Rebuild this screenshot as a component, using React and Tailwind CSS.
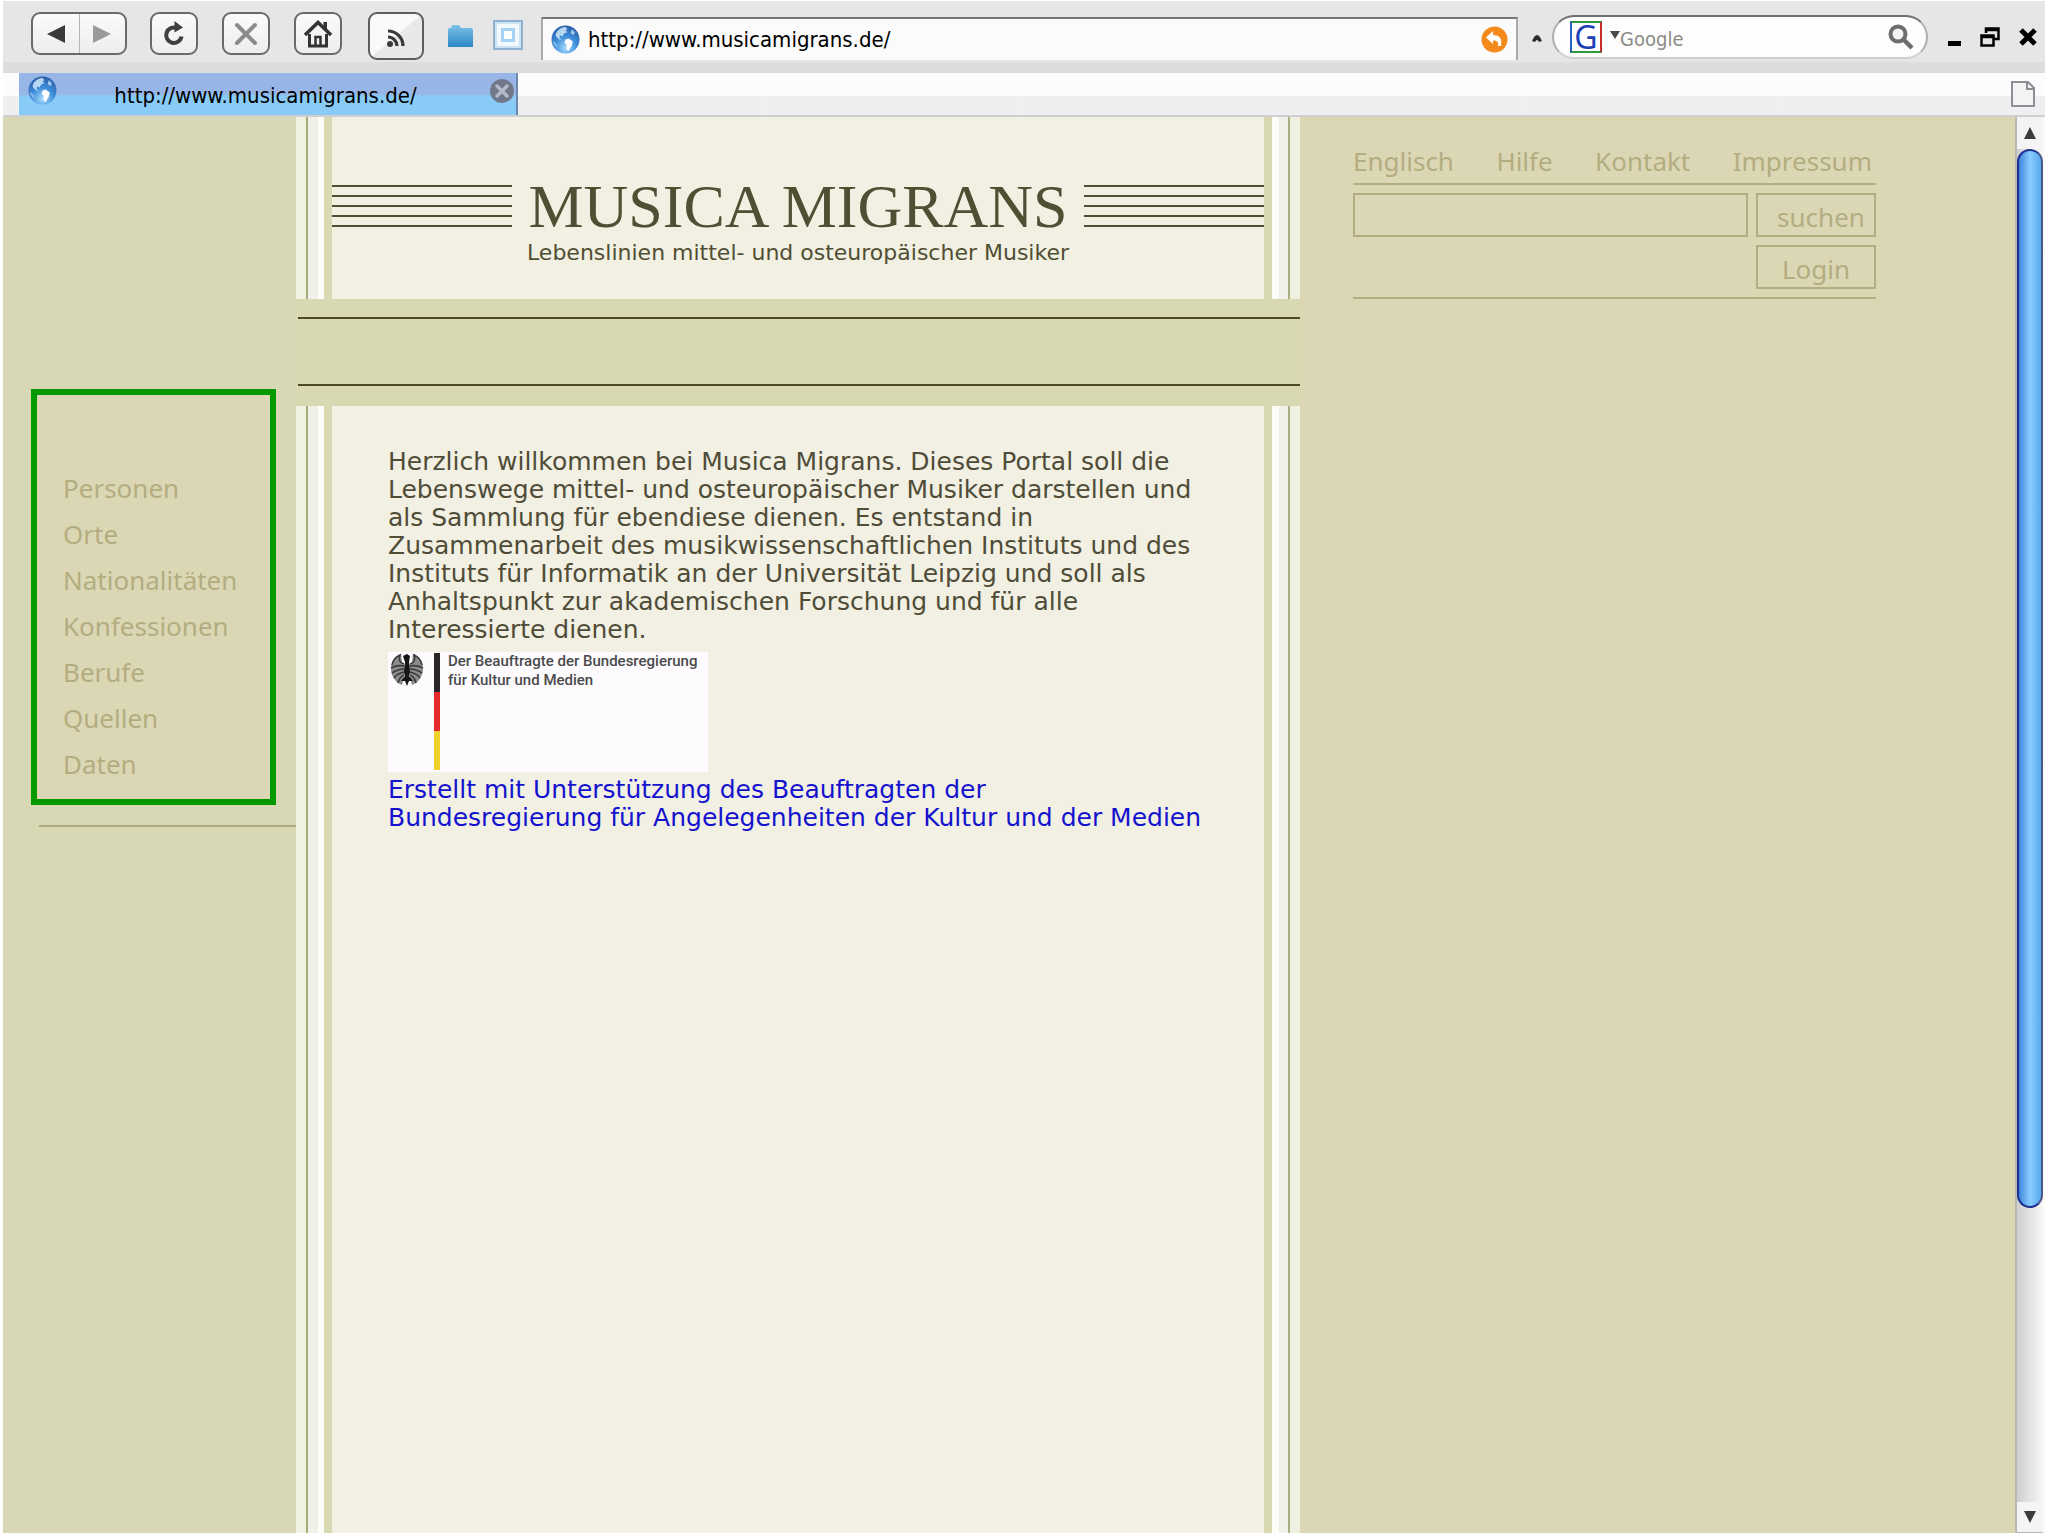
import React from 'react';

const menuItems = ['Personen', 'Orte', 'Nationalitäten', 'Konfessionen', 'Berufe', 'Quellen', 'Daten'];
const topLinks = ['Englisch', 'Hilfe', 'Kontakt', 'Impressum'];

// --- Icons ---
const Globe = ({ id }) => (
  <svg className="size-[29px] shrink-0" viewBox="0 0 28 28" aria-hidden="true">
    <defs>
      <radialGradient id={id} cx="0.5" cy="0.8" r="0.8">
        <stop offset="0" stopColor="#a5dcfb" />
        <stop offset="0.5" stopColor="#3f8fdc" />
        <stop offset="1" stopColor="#2a5ca6" />
      </radialGradient>
    </defs>
    <circle cx="14" cy="14" r="13.5" fill={`url(#${id})`} />
    <path d="M6 6c3-3 5-4 8-4l2 2-2 1 2 2-3 1-2 3-2-1-1 2 2 2-2 0-3-3c-1-2 0-3 1-5z" fill="#cfe7f8" opacity="0.85" />
    <path d="M14 14l3-1 4 3-1 4-3 5-2-1 0-5-2-2z" fill="#fff" />
    <path d="M20 4l3 3-1 3-3-2z" fill="#9cc8ee" />
    <path d="M2 15l3 3 1 4c-2-2-4-4-4-7z" fill="#b8dcf6" opacity="0.7" />
  </svg>
);

const Reload = () => (
  <svg className="w-6 h-7" viewBox="0 0 24 28" aria-hidden="true">
    <path d="M15 8.200A7.700 7.700 0 1 0 19.500 16.500" fill="none" stroke="#3f3f3f" strokeWidth="4" />
    <path d="M12.500 1l8.500 6.500-8.500 5z" fill="#3f3f3f" />
  </svg>
);

const Stop = () => (
  <svg className="size-6" viewBox="0 0 24 24" aria-hidden="true">
    <path d="M3 3l18 18M21 3L3 21" stroke="#8b8b8b" strokeWidth="4" strokeLinecap="round" />
  </svg>
);

const Home = () => (
  <svg className="w-7 h-7" viewBox="0 0 28 28" aria-hidden="true">
    <path d="M1 15L14 2.500 27 15" fill="none" stroke="#333" strokeWidth="3.500" />
    <path d="M19.500 2h3.500v8l-3.500-3z" fill="#333" />
    <path d="M5.500 14v12h17V14" fill="none" stroke="#333" strokeWidth="3" />
    <path d="M11.500 26v-9h5v9" fill="none" stroke="#333" strokeWidth="2.500" />
  </svg>
);

const Feed = () => (
  <svg className="size-5 mt-1" viewBox="0 0 20 20" aria-hidden="true">
    <circle cx="4" cy="16" r="3" fill="#3a3a3a" />
    <path d="M2 9a9 9 0 0 1 9 9M2 3a15 15 0 0 1 15 15" fill="none" stroke="#3a3a3a" strokeWidth="3.200" />
  </svg>
);

const Folder = () => (
  <svg className="w-[27px] h-6" viewBox="0 0 27 24" aria-hidden="true">
    <defs>
      <linearGradient id="folder" x1="0" y1="0" x2="0" y2="1">
        <stop offset="0" stopColor="#7cc3e8" />
        <stop offset="1" stopColor="#2d88c4" />
      </linearGradient>
    </defs>
    <path d="M1 5l1-1h2l1-3h7l2 3h11l1 2v17H1z" fill="url(#folder)" />
  </svg>
);

const Panel = () => (
  <svg className="size-[30px]" viewBox="0 0 30 30" aria-hidden="true">
    <rect x="1" y="1" width="28" height="28" fill="#c9e2f6" stroke="#8fb2d2" strokeWidth="2" />
    <rect x="4" y="4" width="22" height="22" fill="#f2f9fe" />
    <rect x="8" y="8" width="14" height="14" fill="#a4d3f5" />
    <rect x="11" y="11" width="8" height="8" fill="#fff" />
  </svg>
);

const Undo = () => (
  <svg className="size-[27px]" viewBox="0 0 27 27" aria-hidden="true">
    <circle cx="13.500" cy="13.500" r="13" fill="#f58a1c" />
    <path d="M5 11.500L12 5v4c6 0 9.500 3 8 11h-3c1-4-1-5.500-5-5.500V18z" fill="#fff" />
  </svg>
);

const GoogleMark = () => (
  <span className="flex items-center justify-center w-8 h-8 shrink-0 bg-white border-2 border-t-[#2f9a3c] border-b-[#2f9a3c] border-l-[#2b5fc0] border-r-[#c92a2a] text-[32px] leading-7 text-[#1c3fb5] font-['Noto_Sans']">
    G
  </span>
);

const Magnifier = () => (
  <svg className="size-[26px]" viewBox="0 0 26 26" aria-hidden="true">
    <circle cx="10" cy="10" r="7.500" fill="#f4f4f4" stroke="#6d6d6d" strokeWidth="4" />
    <path d="M15.500 15.500L24 24" stroke="#6d6d6d" strokeWidth="4.500" />
  </svg>
);

const Eagle = () => (
  <svg className="w-[34px] h-[34px]" viewBox="0 0 34 34" aria-hidden="true">
    <path d="M11 1C5 3 1 9 1 16c0 7 5 14 11 16l3-12V12l-3-3z" fill="#8c8c8e" />
    <path d="M23 1c6 2 10 8 10 15 0 7-5 14-11 16l-3-12V12l3-3z" fill="#8c8c8e" />
    <g fill="none" stroke="#3b3b3b" strokeWidth="1.600">
      <path d="M14 11C10 10 8 7 10 2 5 4 3 7 2 12" />
      <path d="M20 11c4-1 6-4 4-9 5 2 7 5 8 10" />
      <path d="M14 13C9 12 5 13 1 15M14 16c-5 0-9 2-12 4M14 19c-4 1-8 3-10 6M14 22c-3 1-5 4-6 8" />
      <path d="M20 13c5-1 9 0 13 2M20 16c5 0 9 2 12 4M20 19c4 1 8 3 10 6M20 22c3 1 5 4 6 8" />
    </g>
    <path d="M13 3l4-2 3 2-1 6 1 10-1 4 4 5-4 0-2 5-2-5-4 0 4-5-1-4 1-10z" fill="#161616" />
  </svg>
);

const ToolButton = ({ label, children }) => (
  <button
    aria-label={label}
    className="flex items-center justify-center w-12 h-[43px] rounded-[9px] border-2 border-[#6a6a6a] bg-linear-to-b from-[#fbfbfb] to-[#ededed]"
  >
    {children}
  </button>
);

// --- Browser toolbar ---
const Toolbar = () => (
  <div className="flex items-start h-[72px] pl-7 pr-2 pt-[11px] bg-linear-to-b from-[#e6e6e6] from-85% to-[#dedddd] to-85%">
    <div className="flex w-24 h-[43px] rounded-[9px] border-2 border-[#6a6a6a] bg-linear-to-b from-[#fbfbfb] to-[#ededed]">
      <button aria-label="Zurück" className="flex-1 flex items-center justify-center border-r border-[#b5b5b5]">
        <svg className="w-[18px] h-[18px]" viewBox="0 0 18 18"><path d="M0 9L18 0v18z" fill="#3a3a3a" /></svg>
      </button>
      <button aria-label="Vor" className="flex-1 flex items-center justify-center">
        <svg className="w-[18px] h-[18px]" viewBox="0 0 18 18"><path d="M18 9L0 0v18z" fill="#9a9a9a" /></svg>
      </button>
    </div>
    <div className="flex gap-6 ml-[23px]">
      <ToolButton label="Neu laden"><Reload /></ToolButton>
      <ToolButton label="Stopp"><Stop /></ToolButton>
      <ToolButton label="Startseite"><Home /></ToolButton>
    </div>
    <button aria-label="Feed" className="flex items-center justify-center w-14 h-12 ml-[26px] rounded-[9px] border-2 border-[#5e5e5e] bg-linear-to-br from-[#fafafa] from-50% to-[#e9e9e9] to-50%">
      <Feed />
    </button>
    <button aria-label="Ordner" className="mt-3 ml-[23px]"><Folder /></button>
    <button aria-label="Seitenleiste" className="mt-2 ml-[19px]"><Panel /></button>

    <div className="flex items-center flex-1 h-[43px] mt-[5px] ml-[18px] px-2 bg-[#fbfbfb] border-t-2 border-t-[#757575] border-x-2 border-x-[#a9a9a9]">
      <Globe id="globe-address" />
      <input
        aria-label="Adresse"
        defaultValue="http://www.musicamigrans.de/"
        className="flex-1 ml-2 bg-transparent text-[22px] text-black outline-none font-['DejaVu_Sans_Condensed','DejaVu_Sans',sans-serif]"
      />
      <button aria-label="Los"><Undo /></button>
    </div>

    <svg className="w-[10px] h-[9px] mt-[23px] mx-3.5" viewBox="0 0 10 9" aria-hidden="true">
      <path d="M0 6Q5-6 10 6L7 7Q5 3 3 7z" fill="#2c2c2c" />
    </svg>

    <div className="flex items-center w-[376px] h-11 mt-[3px] -ml-1 pl-4 pr-3 rounded-full bg-[#fdfdfd] border-2 border-t-[#707070] border-x-[#b0b0b0] border-b-[#cfcfcf]">
      <GoogleMark />
      <svg className="w-[10px] h-2 ml-2 mb-1" viewBox="0 0 10 8" aria-hidden="true"><path d="M0 0h10L5 8z" fill="#4a4a4a" /></svg>
      <input
        aria-label="Suche"
        placeholder="Google"
        className="flex-1 w-0 pt-1 bg-transparent text-[20px] placeholder:text-[#8b8b86] outline-none font-['DejaVu_Sans_Condensed','DejaVu_Sans',sans-serif]"
      />
      <button aria-label="Suchen"><Magnifier /></button>
    </div>

    <div className="flex gap-[19px] ml-5 pt-[15px]">
      <button aria-label="Minimieren">
        <svg className="w-[13px] h-5" viewBox="0 0 13 20"><path d="M0 14h13v5H0z" /></svg>
      </button>
      <button aria-label="Wiederherstellen">
        <svg className="size-5" viewBox="0 0 20 20">
          <path d="M6 6V1.500h12.500V12H14M6 3h12" fill="none" stroke="#000" strokeWidth="2.500" />
          <path d="M1.500 8.500H13.500V18.500H1.500zM1.500 10h12" fill="none" stroke="#000" strokeWidth="2.500" />
        </svg>
      </button>
      <button aria-label="Schließen">
        <svg className="w-[18px] h-5" viewBox="0 0 18 20"><path d="M2 3l14 14M16 3L2 17" stroke="#000" strokeWidth="5" /></svg>
      </button>
    </div>
  </div>
);

// --- Tab strip ---
const TabStrip = () => (
  <div className="flex items-stretch h-11 pl-4 pr-2.5 border-b-2 border-[#cfced0] bg-linear-to-b from-[#fcfbfd] from-55% to-[#efeef1] to-55%">
    <div className="flex items-center w-[499px] pl-[9px] pr-0.5 border-r-2 border-[#6d87ad] bg-linear-to-b from-[#97b5e6] from-50% to-[#88cbf6] to-55%">
      <div className="self-start pt-[3px]"><Globe id="globe-tab" /></div>
      <a href="#start" className="flex-1 pr-4 pt-1 text-center text-[22px] leading-8 text-black font-['DejaVu_Sans_Condensed','DejaVu_Sans',sans-serif]">
        http://www.musicamigrans.de/
      </a>
      <button aria-label="Tab schließen" className="self-start pt-[6px]">
        <svg className="size-6" viewBox="0 0 24 24">
          <circle cx="12" cy="12" r="12" fill="#71788a" />
          <path d="M7 7l10 10M17 7L7 17" stroke="#b4bac8" strokeWidth="3.500" strokeLinecap="round" />
        </svg>
      </button>
    </div>
    <button aria-label="Neuer Tab" className="ml-auto">
      <svg className="w-6 h-[26px]" viewBox="0 0 24 26">
        <path d="M1 1h16l6 6v18H1z" fill="#f3f3f4" stroke="#8e8e94" strokeWidth="2" />
        <path d="M16 1v7h7" fill="none" stroke="#8e8e94" strokeWidth="2" />
      </svg>
    </button>
  </div>
);

// --- Left menu ---
const Sidebar = () => (
  <aside className="w-[293px] shrink-0 pt-[272px] bg-[#d8d8b4]">
    <nav className="w-[245px] h-[416px] ml-7 pl-[26px] pt-[70px] border-6 border-[#009a00] bg-[#dbd7b5]">
      <ul className="text-[26px] leading-[46px] text-[#b3ad80]">
        {menuItems.map(item => (
          <li key={item}><a href={`#${item}`}>{item}</a></li>
        ))}
      </ul>
    </nav>
    <hr className="mt-5 ml-9 border-t-2 border-[#aeaa80]" />
  </aside>
);

// --- Vertical ribbons beside the cream panels ---
const LeftRibbon = () => (
  <div className="flex w-9 shrink-0">
    <div className="w-2.5 bg-[#f0f1e1]" />
    <div className="w-0.5 bg-[#a3ad7c]" />
    <div className="w-2.5 bg-[#f0f0e8]" />
    <div className="w-1.5 bg-[#fdfdfc]" />
  </div>
);

const RightRibbon = () => (
  <div className="flex justify-end w-9 shrink-0">
    <div className="w-[7px] bg-[#fdfdf8]" />
    <div className="w-[9px] bg-[#f0f0e8]" />
    <div className="w-0.5 bg-[#a9ad83]" />
    <div className="w-2.5 bg-[#f0f0e1]" />
  </div>
);

const Staff = () => (
  <div className="flex flex-col justify-between w-[180px] h-[42px]">
    {[1, 2, 3, 4, 5].map(n => <div key={n} className="h-0.5 bg-[#504e33]" />)}
  </div>
);

const Banner = () => (
  <header className="flex h-[182px]">
    <LeftRibbon />
    <div className="flex-1 pt-[68px] bg-[#f1f0e2] text-[#504e33]">
      <div className="flex items-center justify-between">
        <Staff />
        <h1 className="text-[62px] leading-[42px] whitespace-nowrap font-['Liberation_Serif',serif]">MUSICA MIGRANS</h1>
        <Staff />
      </div>
      <p className="mt-3.5 text-center text-[22px] leading-6 font-['DejaVu_Sans',sans-serif]">
        Lebenslinien mittel- und osteuropäischer Musiker
      </p>
    </div>
    <RightRibbon />
  </header>
);

const Sponsor = () => (
  <div className="flex w-80 h-[120px] mt-2 bg-[#fdfbfd]">
    <div className="w-[46px] pl-0.5 pt-px"><Eagle /></div>
    <div className="flex flex-col w-1.5 h-[117px] mt-px">
      <div className="flex-1 bg-[#2a2628]" />
      <div className="flex-1 bg-[#e62a2c]" />
      <div className="flex-1 bg-[#efd02c]" />
    </div>
    <p className="ml-2 text-[15px] leading-[19px] font-medium text-[#4a4a4c] whitespace-nowrap font-[Roboto,sans-serif]">
      Der Beauftragte der Bundesregierung<br />
      für Kultur und Medien
    </p>
  </div>
);

const Content = () => (
  <main className="flex flex-1">
    <LeftRibbon />
    <div className="flex-1 pl-14 pt-[42px] bg-[#f1f0e2] text-[25px] leading-7 whitespace-nowrap text-[#4f4c38] font-['DejaVu_Sans',sans-serif]">
      <p>
        Herzlich willkommen bei Musica Migrans. Dieses Portal soll die<br />
        Lebenswege mittel- und osteuropäischer Musiker darstellen und<br />
        als Sammlung für ebendiese dienen. Es entstand in<br />
        Zusammenarbeit des musikwissenschaftlichen Instituts und des<br />
        Instituts für Informatik an der Universität Leipzig und soll als<br />
        Anhaltspunkt zur akademischen Forschung und für alle<br />
        Interessierte dienen.
      </p>
      <Sponsor />
      <a href="#foerderung" className="block mt-1 text-[#1512cf]">
        Erstellt mit Unterstützung des Beauftragten der<br />
        Bundesregierung für Angelegenheiten der Kultur und der Medien
      </a>
    </div>
    <RightRibbon />
  </main>
);

// --- Links, search and login on the right ---
const Tools = () => (
  <div className="w-[523px] ml-[53px] pt-7 text-[26px] text-[#b3ad80]">
    <nav className="flex justify-between h-10 pr-1 leading-8 border-b-2 border-[#b3ae82]">
      {topLinks.map(link => <a key={link} href={`#${link}`}>{link}</a>)}
    </nav>
    <form className="grid grid-cols-[1fr_120px] gap-x-2 gap-y-2 py-2 border-b-2 border-[#b3ae82]">
      <input aria-label="Suchbegriff" className="min-w-0 h-11 px-2 bg-transparent border-2 border-[#b3ae82] outline-none" />
      <button type="button" className="h-11 pl-2.5 pt-1 leading-8 border-2 border-[#b3ae82]">suchen</button>
      <button type="button" className="col-start-2 h-11 pt-1 leading-8 border-2 border-[#b3ae82]">Login</button>
    </form>
  </div>
);

const Scrollbar = () => (
  <div className="flex flex-col w-[30px] shrink-0 pr-0.5 border-l-2 border-[#b9b9b4] bg-linear-to-r from-[#cfcfd1] to-[#fbfbf9]">
    <button aria-label="Nach oben" className="flex items-center justify-center h-8 bg-[#f4f4f4]">
      <svg className="w-3 h-3" viewBox="0 0 12 12"><path d="M6 0l6 12H0z" fill="#3c3c3c" /></svg>
    </button>
    <div className="flex-[1058] rounded-full border-2 border-[#1d2f8f] border-r-[#4a5a86] bg-linear-to-r from-[#3f86dc] via-[#8accff] to-[#5aa9f0]" />
    <div className="flex-[295]" />
    <button aria-label="Nach unten" className="flex items-center justify-center h-[31px] bg-[#f4f4f4] border-b border-[#b9b9b4]">
      <svg className="w-3 h-3" viewBox="0 0 12 12"><path d="M6 12L0 0h12z" fill="#3c3c3c" /></svg>
    </button>
  </div>
);

const App = () => (
  <div className="flex flex-col min-h-screen pt-px pl-[3px] pr-[3px] pb-[3px] bg-white font-['Noto_Sans',sans-serif]">
    <Toolbar />
    <TabStrip />
    <div className="flex flex-1 bg-[#dbd7b4]">
      <Sidebar />
      <div className="flex flex-col w-[1004px] shrink-0 bg-[#d8d8b3]">
        <Banner />
        <div className="h-[69px] ml-0.5 mt-[18px] mb-5 border-y-2 border-[#4c4a28]" />
        <Content />
      </div>
      <div className="flex-1"><Tools /></div>
      <Scrollbar />
    </div>
  </div>
);

export default App;
